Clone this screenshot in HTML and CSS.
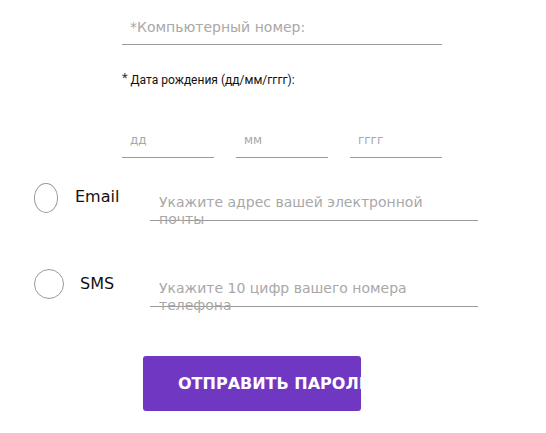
FILE: index.html
```html
<!DOCTYPE html>
<html lang="ru">
<head>
<meta charset="utf-8">
<link rel="stylesheet" href="styles.css">
</head>
<body>
<div class="form">
  <div class="top">
    <div class="field">
      <span class="ph">*Компьютерный номер:</span>
    </div>
    <div class="dob-label"><span class="ast">*</span> Дата рождения (дд/мм/гггг):</div>
    <div class="dob">
      <div class="field small"><span class="ph">дд</span></div>
      <div class="field small"><span class="ph">мм</span></div>
      <div class="field small"><span class="ph">гггг</span></div>
    </div>
  </div>
  <div class="opt opt-email">
    <span class="radio oval"></span>
    <span class="opt-label email-label">Email</span>
    <div class="opt-input">
      <span class="ph2">Укажите адрес вашей электронной почты</span>
    </div>
  </div>
  <div class="opt opt-sms">
    <span class="radio"></span>
    <span class="opt-label sms-label">SMS</span>
    <div class="opt-input">
      <span class="ph2">Укажите 10 цифр вашего номера телефона</span>
    </div>
  </div>
  <div class="btn-row">
    <div class="btn"><span class="btn-text">ОТПРАВИТЬ ПАРОЛЬ</span></div>
  </div>
</div>
</body>
</html>
```
FILE: styles.css
```css
* { box-sizing: border-box; }
html, body { margin: 0; padding: 0; background: #fff; }
body { font-family: "DejaVu Sans", "Open Sans", sans-serif; width: 546px; height: 433px; overflow: hidden; }
.top { margin-left: 122px; width: 320px; }
.field {
  height: 45px;
  border-bottom: 1px solid #9a9a9a;
  padding: 17px 0 0 8px;
}
.ph { color: #a8a8a8; font-size: 14px; line-height: 18px; white-space: nowrap; }
.dob-label {
  margin-top: 25px;
  font-family: Roboto, "Noto Sans", sans-serif;
  font-size: 12px;
  color: #111;
  line-height: 16px;
}
.ast { font-size: 13px; color: #333; vertical-align: 2px; }
.dob { display: flex; gap: 22px; }
.field.small { width: 92px; height: 70px; padding-top: 41px; }
.field.small .ph { font-size: 12px; }
.opt { display: flex; align-items: flex-start; margin-left: 34px; }
.opt-email { margin-top: 25px; }
.opt-sms { margin-top: 48px; }
.radio {
  width: 30px; height: 30px; border: 1px solid #9a9a9a; border-radius: 50%;
  flex: none;
}
.radio.oval { width: 24px; height: 30px; }
.opt-label { font-size: 16px; color: #111; line-height: 20px; }
.email-label { margin-left: 17px; margin-top: 4px; width: 75px; }
.sms-label { margin-left: 16px; margin-top: 5px; width: 70px; }
.opt-input {
  width: 328px; margin-top: 9px;
  border-bottom: 1px solid #9a9a9a;
  height: 29px;
  padding: 2px 0 0 9px;
}
.ph2 { display: block; color: #a8a8a8; font-size: 14px; line-height: 17px; width: 300px; }
.btn-row { margin-left: 143px; margin-top: 49px; }
.btn {
  width: 218px; height: 55px; background: #7038c2; border-radius: 3px;
  overflow: hidden; padding: 18px 0 0 35px;
}
.btn-text { color: #fff; font-weight: bold; font-size: 16px; white-space: nowrap; line-height: 20px; display: block; }
```
